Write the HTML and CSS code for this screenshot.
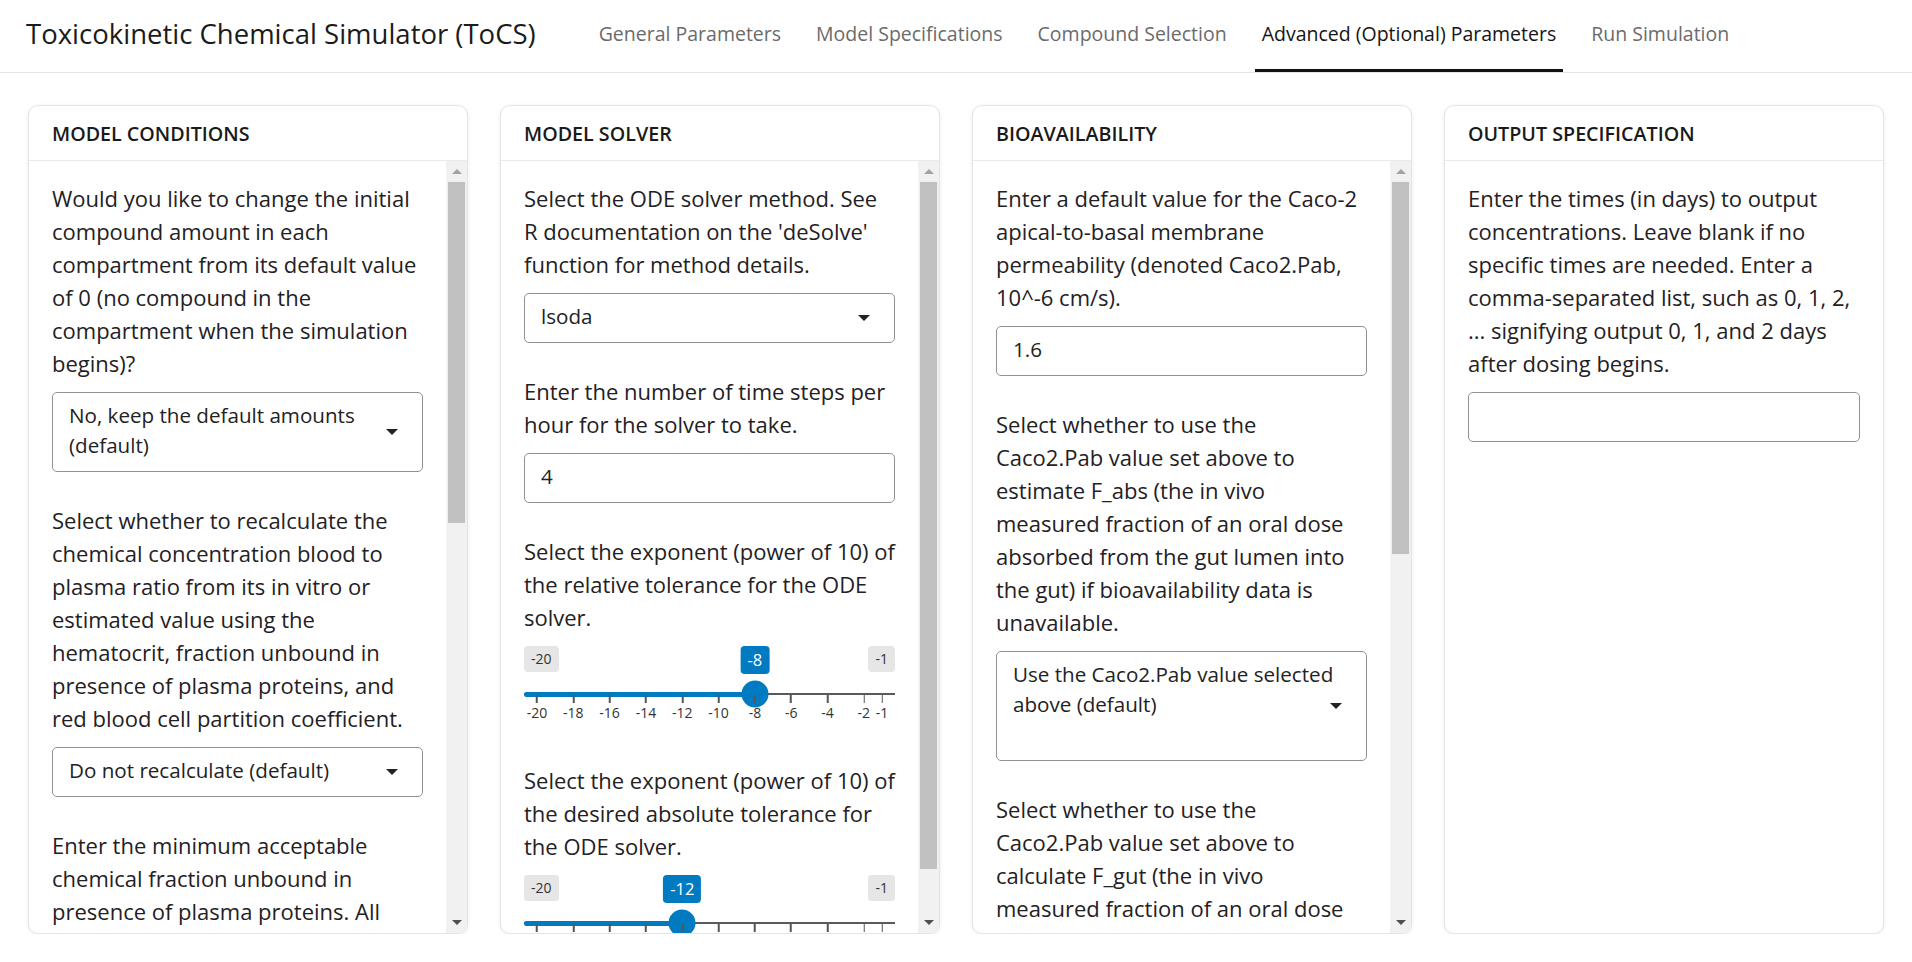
FILE: index.html
```html
<!DOCTYPE html>
<html lang="en">
<head>
<meta charset="utf-8">
<title>Toxicokinetic Chemical Simulator (ToCS)</title>
<link rel="stylesheet" href="styles.css">
</head>
<body>
<header class="navbar">
  <div class="brand">Toxicokinetic Chemical Simulator (ToCS)</div>
  <nav class="tabs">
    <a class="tab">General Parameters</a>
    <a class="tab">Model Specifications</a>
    <a class="tab">Compound Selection</a>
    <a class="tab active">Advanced (Optional) Parameters</a>
    <a class="tab">Run Simulation</a>
  </nav>
</header>

<main class="cards">
  <section class="card">
    <div class="card-header">Model Conditions</div>
    <div class="card-body">
      <div class="scroll-content">
        <div class="form-group">
          <label class="control-label">Would you like to change the initial compound amount in each compartment from its default value of 0 (no compound in the compartment when the simulation begins)?</label>
          <div class="select"><span class="select-text">No, keep the default amounts (default)</span><span class="caret"></span></div>
        </div>
        <div class="form-group">
          <label class="control-label">Select whether to recalculate the chemical concentration blood to plasma ratio from its in vitro or estimated value using the hematocrit, fraction unbound in presence of plasma proteins, and red blood cell partition coefficient.</label>
          <div class="select"><span class="select-text">Do not recalculate (default)</span><span class="caret"></span></div>
        </div>
        <div class="form-group">
          <label class="control-label">Enter the minimum acceptable chemical fraction unbound in presence of plasma proteins. All values below this will be set to this value.</label>
          <div class="input"><span class="input-text">0.0001</span></div>
        </div>
      </div>
      <div class="scrollbar">
        <span class="sb-btn"><i class="arrow-up"></i></span>
        <div class="sb-track"><div class="sb-thumb" style="height: 341px"></div></div>
        <span class="sb-btn"><i class="arrow-down"></i></span>
      </div>
    </div>
  </section>

  <section class="card">
    <div class="card-header">Model Solver</div>
    <div class="card-body">
      <div class="scroll-content">
        <div class="form-group">
          <label class="control-label">Select the ODE solver method. See R documentation on the 'deSolve' function for method details.</label>
          <div class="select"><span class="select-text">lsoda</span><span class="caret"></span></div>
        </div>
        <div class="form-group">
          <label class="control-label">Enter the number of time steps per hour for the solver to take.</label>
          <div class="input"><span class="input-text">4</span></div>
        </div>
        <div class="form-group">
          <label class="control-label">Select the exponent (power of 10) of the relative tolerance for the ODE solver.</label>
          <div class="slider">
            <div class="slider-top">
              <span class="edge-label">-20</span>
              <span class="edge-label">-1</span>
            </div>
            <span class="bubble" style="--p: 0.6316">-8</span>
            <div class="track"><div class="fill" style="--p: 0.6316"></div><span class="handle" style="--p: 0.6316"></span></div>
            <div class="grid">
              <span class="tick" style="--p: 0"><i></i><b>-20</b></span>
              <span class="tick" style="--p: 0.1053"><i></i><b>-18</b></span>
              <span class="tick" style="--p: 0.2105"><i></i><b>-16</b></span>
              <span class="tick" style="--p: 0.3158"><i></i><b>-14</b></span>
              <span class="tick" style="--p: 0.4211"><i></i><b>-12</b></span>
              <span class="tick" style="--p: 0.5263"><i></i><b>-10</b></span>
              <span class="tick" style="--p: 0.6316"><i></i><b>-8</b></span>
              <span class="tick" style="--p: 0.7368"><i></i><b>-6</b></span>
              <span class="tick" style="--p: 0.8421"><i></i><b>-4</b></span>
              <span class="tick minor" style="--p: 0.9474"><i></i><b>-2</b></span>
              <span class="tick minor" style="--p: 1"><i></i><b>-1</b></span>
            </div>
          </div>
        </div>
        <div class="form-group">
          <label class="control-label">Select the exponent (power of 10) of the desired absolute tolerance for the ODE solver.</label>
          <div class="slider">
            <div class="slider-top">
              <span class="edge-label">-20</span>
              <span class="edge-label">-1</span>
            </div>
            <span class="bubble" style="--p: 0.4211">-12</span>
            <div class="track"><div class="fill" style="--p: 0.4211"></div><span class="handle" style="--p: 0.4211"></span></div>
            <div class="grid">
              <span class="tick" style="--p: 0"><i></i><b>-20</b></span>
              <span class="tick" style="--p: 0.1053"><i></i><b>-18</b></span>
              <span class="tick" style="--p: 0.2105"><i></i><b>-16</b></span>
              <span class="tick" style="--p: 0.3158"><i></i><b>-14</b></span>
              <span class="tick" style="--p: 0.4211"><i></i><b>-12</b></span>
              <span class="tick" style="--p: 0.5263"><i></i><b>-10</b></span>
              <span class="tick" style="--p: 0.6316"><i></i><b>-8</b></span>
              <span class="tick" style="--p: 0.7368"><i></i><b>-6</b></span>
              <span class="tick" style="--p: 0.8421"><i></i><b>-4</b></span>
              <span class="tick minor" style="--p: 0.9474"><i></i><b>-2</b></span>
              <span class="tick minor" style="--p: 1"><i></i><b>-1</b></span>
            </div>
          </div>
        </div>
      </div>
      <div class="scrollbar">
        <span class="sb-btn"><i class="arrow-up"></i></span>
        <div class="sb-track"><div class="sb-thumb" style="height: 687px"></div></div>
        <span class="sb-btn"><i class="arrow-down"></i></span>
      </div>
    </div>
  </section>

  <section class="card">
    <div class="card-header">Bioavailability</div>
    <div class="card-body">
      <div class="scroll-content">
        <div class="form-group">
          <label class="control-label">Enter a default value for the Caco-2 apical-to-basal membrane permeability (denoted Caco2.Pab, 10^-6 cm/s).</label>
          <div class="input"><span class="input-text">1.6</span></div>
        </div>
        <div class="form-group">
          <label class="control-label">Select whether to use the Caco2.Pab value set above to estimate F_abs (the in vivo measured fraction of an oral dose absorbed from the gut lumen into the gut) if bioavailability data is unavailable.</label>
          <div class="select tall"><span class="select-text">Use the Caco2.Pab value selected above (default)</span><span class="caret"></span></div>
        </div>
        <div class="form-group">
          <label class="control-label">Select whether to use the Caco2.Pab value set above to calculate F_gut (the in vivo measured fraction of an oral dose that passes through the gut) if bioavailability data is unavailable.</label>
          <div class="select tall"><span class="select-text">Use the Caco2.Pab value selected above (default)</span><span class="caret"></span></div>
        </div>
      </div>
      <div class="scrollbar">
        <span class="sb-btn"><i class="arrow-up"></i></span>
        <div class="sb-track"><div class="sb-thumb" style="height: 372px"></div></div>
        <span class="sb-btn"><i class="arrow-down"></i></span>
      </div>
    </div>
  </section>

  <section class="card">
    <div class="card-header">Output Specification</div>
    <div class="card-body">
      <div class="scroll-content">
        <div class="form-group">
          <label class="control-label">Enter the times (in days) to output concentrations. Leave blank if no specific times are needed. Enter a comma-separated list, such as 0, 1, 2, ... signifying output 0, 1, and 2 days after dosing begins.</label>
          <div class="input"><span class="input-text"></span></div>
        </div>
      </div>
    </div>
  </section>
</main>
</body>
</html>
```

FILE: styles.css
```css
* { box-sizing: border-box; }

html, body {
  margin: 0;
  padding: 0;
  background: #ffffff;
  font-family: "Open Sans", "Liberation Sans", sans-serif;
  color: #1d1f21;
}

.navbar {
  display: flex;
  align-items: stretch;
  height: 73px;
  border-bottom: 1px solid #e6e6e6;
  padding-left: 26px;
}

.brand {
  display: flex;
  align-items: center;
  font-size: 27.5px;
  color: #1b1b1b;
  padding-bottom: 5px;
}

.tabs {
  display: flex;
  align-items: stretch;
  gap: 21px;
  margin-left: 56px;
}

.tab {
  display: flex;
  align-items: center;
  padding: 0 7px 3px;
  font-size: 19.5px;
  color: #6b6b6b;
  border-bottom: 3px solid transparent;
  cursor: pointer;
}

.tab.active {
  color: #151515;
  border-bottom-color: #111111;
}

.cards {
  display: grid;
  grid-template-columns: repeat(4, 1fr);
  gap: 32px;
  padding: 32px 28px 0;
}

.card {
  display: flex;
  flex-direction: column;
  height: 829px;
  border: 1px solid #e4e4e4;
  border-radius: 10px;
  background: #fff;
  box-shadow: 0 1px 4px rgba(0, 0, 0, 0.08);
  overflow: hidden;
}

.card-header {
  flex: none;
  height: 55px;
  padding: 0 23px;
  display: flex;
  align-items: center;
  border-bottom: 1px solid #e8eaec;
  font-size: 19.7px;
  font-weight: 600;
  text-transform: uppercase;
  color: #1a1a1a;
}

.card-body {
  flex: 1;
  min-height: 0;
  display: flex;
}

.scroll-content {
  flex: 1;
  min-width: 0;
  overflow: hidden;
  padding: 21px 23px 20px;
}

.scrollbar {
  flex: none;
  width: 21px;
  display: flex;
  flex-direction: column;
  background: #f1f1f1;
}

.sb-btn {
  flex: none;
  height: 21px;
  display: flex;
  align-items: center;
  justify-content: center;
}

.sb-track {
  flex: 1;
  min-height: 0;
  padding: 0 2px;
}

.sb-thumb {
  background: #c1c1c1;
}

.arrow-up {
  width: 0;
  height: 0;
  border-left: 5px solid transparent;
  border-right: 5px solid transparent;
  border-bottom: 5px solid #a3a3a3;
}

.arrow-down {
  width: 0;
  height: 0;
  border-left: 5px solid transparent;
  border-right: 5px solid transparent;
  border-top: 5px solid #505050;
}

.form-group {
  margin-bottom: 32px;
}

.control-label {
  display: block;
  font-size: 22px;
  line-height: 33px;
  color: #1f2124;
  margin-bottom: 12px;
}

.select,
.input {
  position: relative;
  display: flex;
  align-items: flex-start;
  width: 100%;
  min-height: 50px;
  border: 1px solid #8e9297;
  border-radius: 5px;
  padding: 7px 16px 11px 16px;
  font-size: 20.6px;
  line-height: 30px;
  color: #222;
  background: #fff;
}

.select {
  padding-right: 30px;
}

.select.tall {
  height: 110px;
}

.select-text,
.input-text {
  flex: 1;
  min-height: 30px;
}

.caret {
  position: absolute;
  right: 24px;
  top: 50%;
  margin-top: -3px;
  width: 0;
  height: 0;
  border-left: 6px solid transparent;
  border-right: 6px solid transparent;
  border-top: 6px solid #222;
}

/* slider */
.slider {
  position: relative;
  height: 86px;
}

.slider-top {
  display: flex;
  justify-content: space-between;
}

.edge-label {
  height: 26px;
  line-height: 26px;
  padding: 0 7px;
  background: #e6e6e6;
  border-radius: 4px;
  color: #333;
  font-size: 14px;
}

.bubble {
  position: absolute;
  top: 0;
  left: calc(13px + (100% - 26px) * var(--p));
  transform: translateX(-50%);
  height: 28px;
  line-height: 28px;
  padding: 0 7px;
  background: #007bc2;
  color: #fff;
  border-radius: 4px;
  font-size: 16.5px;
}

.track {
  position: relative;
  margin-top: 21px;
  height: 2px;
  background: #5a5a5a;
}

.fill {
  position: absolute;
  left: 0;
  top: -1px;
  height: 5px;
  width: calc(13px + (100% - 26px) * var(--p));
  background: #007bc2;
  border-radius: 3px 0 0 3px;
}

.handle {
  position: absolute;
  top: 1px;
  left: calc(13px + (100% - 26px) * var(--p));
  width: 27px;
  height: 27px;
  transform: translate(-50%, -50%);
  border-radius: 50%;
  background: #007bc2;
}

.grid {
  position: relative;
  height: 30px;
  margin: 0 13px;
}

.tick {
  position: absolute;
  top: 0;
  left: calc(100% * var(--p));
  transform: translateX(-50%);
  display: flex;
  flex-direction: column;
  align-items: center;
}

.tick i {
  display: block;
  width: 2px;
  height: 8px;
  background: #555;
}

.tick.minor i {
  width: 1px;
}

.tick b {
  font-weight: 400;
  font-size: 14px;
  line-height: 18px;
  color: #333;
  margin-top: 1px;
}
```
